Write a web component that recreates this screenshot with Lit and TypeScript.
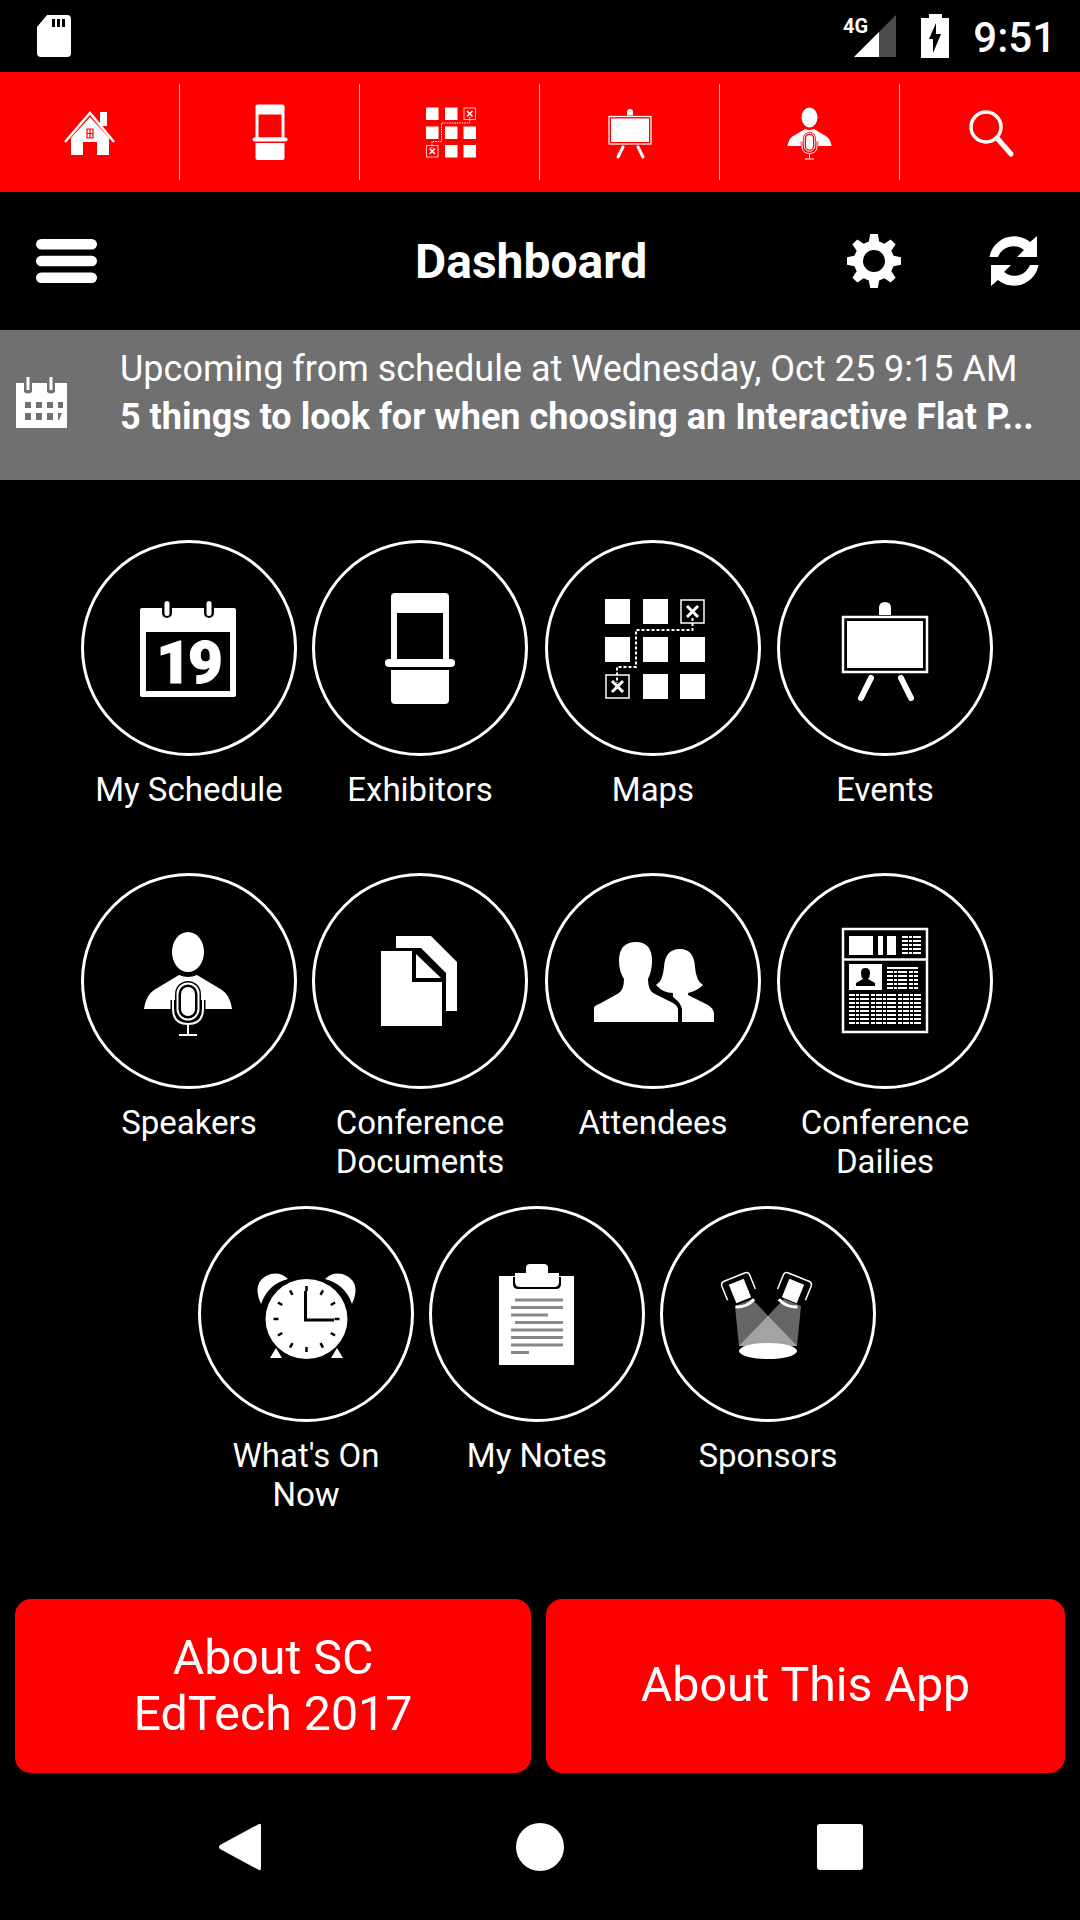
import { LitElement, css, html, svg } from 'lit'
import { customElement } from 'lit/decorators.js'

// icons are drawn in a 120 box centred on the circle, the top bar shows them at half size
const calendar = svg`
  <rect x="11" y="20" width="96" height="89" rx="2" class="w"></rect>
  <rect x="17" y="44" width="84" height="59" class="c"></rect>
  <rect x="33" y="12" width="10" height="18" rx="5" class="c"></rect>
  <rect x="35.5" y="13" width="5" height="15" rx="2.5" class="w"></rect>
  <rect x="75" y="12" width="10" height="18" rx="5" class="c"></rect>
  <rect x="77.5" y="13" width="5" height="15" rx="2.5" class="w"></rect>
  <text x="59" y="95" class="cal-num">19</text>`

const exhibitors = svg`
  <path d="M35 5H85Q89 5 89 9V72H31V9Q31 5 35 5Z" class="w"></path>
  <rect x="37" y="25" width="46" height="46" class="c"></rect>
  <rect x="25" y="71" width="70" height="8" rx="4" class="w"></rect>
  <path d="M31 82H89V112Q89 116 85 116H35Q31 116 31 112Z" class="w"></path>`

const maps = svg`
  <rect x="50" y="11" width="25" height="25" class="w"></rect>
  <rect x="12" y="11" width="25" height="25" class="w"></rect>
  <rect x="12" y="49" width="25" height="25" class="w"></rect>
  <rect x="50" y="49" width="25" height="25" class="w"></rect>
  <rect x="87" y="49" width="25" height="25" class="w"></rect>
  <rect x="50" y="86" width="25" height="25" class="w"></rect>
  <rect x="87" y="86" width="25" height="25" class="w"></rect>
  <rect x="88" y="12" width="23" height="23" class="ln thin"></rect>
  <rect x="13" y="87" width="23" height="23" class="ln thin"></rect>
  <path d="M94 18L105 29M105 18L94 29M19 93L30 104M30 93L19 104" class="ln x"></path>
  <path d="M99.5 30V42H43V79H24V95" class="ln dash"></path>`

const events = svg`
  <path d="M54 27V20Q54 14 60 14Q66 14 66 20V27Z" class="w"></path>
  <rect x="18" y="29" width="84" height="55" class="ln thick"></rect>
  <rect x="22" y="33" width="76" height="47" class="w"></rect>
  <path d="M46 90L36 110M76 90L86 110" class="ln leg"></path>`

const speakers = svg`
  <ellipse cx="59" cy="31" rx="16" ry="20" class="w"></ellipse>
  <path d="M15 88Q17 74 25 69L50 54Q59 58 68 54L93 69Q101 74 103 88Z" class="w"></path>
  <path d="M44 79V88Q44 103 59 103Q74 103 74 88V79" class="ln halo"></path>
  <rect x="46" y="60" width="26" height="41" rx="13" class="c"></rect>
  <rect x="48.5" y="62.5" width="21" height="36" rx="10.5" class="ln mic"></rect>
  <rect x="52" y="66" width="14" height="29" rx="7" class="w"></rect>
  <path d="M44 79V88Q44 103 59 103Q74 103 74 88V79M59 103V113M50 114H68" class="ln mic"></path>`

const documents = svg`
  <path d="M36 15H71L97 41V90H86V52L61 27H36Z" class="w"></path>
  <path d="M21 30H52V61H82V105H21Z" class="w"></path>
  <path d="M56 33L81 57H56Z" class="w"></path>`

const attendees = svg`
  <path d="M1 101V86Q3 84 8 82L26 72Q31 68 31 58Q26 50 26 40Q26 21 43 21Q59 21 59 40Q59 50 55 58Q55 68 60 72L80 82Q84 84 85 88V101Z" class="w"></path>
  <path d="M63 64Q70 60 71 46Q72 28 87 28Q101 28 102 46Q103 60 110 64Q104 70 95 72V74L115 84Q120 87 121 92V101H89V88Q88 82 80 76V72Q70 72 63 64Z" class="w"></path>`

const dailies = svg`
  <rect x="18" y="8" width="84" height="103" class="ln frame"></rect>
  <path d="M18 38.5H102" class="ln frame"></path>
  <rect x="24" y="15" width="24" height="19" class="w"></rect>
  <rect x="53" y="15" width="5" height="19" class="w"></rect>
  <rect x="62" y="15" width="9" height="19" class="w"></rect>
  <path d="M77 16H96M77 20H96M77 24H96M77 28H96M77 32H96" class="ln tiny"></path>
  <rect x="24" y="43" width="33" height="26" class="w"></rect>
  <path d="M40.5 47Q45 47 45 52Q45 56 43 58L50 62V65H31V62L38 58Q36 56 36 52Q36 47 40.5 47Z" class="c"></path>
  <path d="M62 47H93" class="ln bar"></path>
  <path d="M62 51H93M62 55H93M62 59H93M62 63H93M62 67H93" class="ln tiny"></path>
  <path d="M24 74H96M24 78H96M24 82H96M24 86H96M24 90H96M24 94H96M24 98H96M24 102H96" class="ln tiny"></path>`

// ticks of the clock face
const ticks = Array.from({ length: 12 }, (_, i) => i * 30)
const clock = svg`
  <path d="M15 50Q6 30 20 22Q32 16 42 25Q22 30 15 50Z" class="w"></path>
  <path d="M106 50Q115 30 101 22Q89 16 79 25Q99 30 106 50Z" class="w"></path>
  <path d="M24 104L30 94L36 104ZM97 104L91 94L85 104Z" class="w"></path>
  <ellipse cx="60.5" cy="65" rx="41" ry="40" class="w"></ellipse>
  ${ticks.map((a) => svg`<line x1="60.5" y1="32" x2="60.5" y2="37" class="ln tick" transform="rotate(${a} 60.5 65)"></line>`)}
  <path d="M59.5 37V66H88" class="ln hand"></path>`

const notes = svg`
  <rect x="22" y="22" width="75" height="89" class="w"></rect>
  <path d="M36 23H84V30Q84 35 79 35H41Q36 35 36 30Z" class="c"></path>
  <path d="M38 19H49V14Q49 10 53 10H67Q71 10 71 14V19H82V28Q82 33 77 33H43Q38 33 38 28Z" class="w"></path>
  <path d="M38 46H86M34 53.5H86M34 61H71M38 68.5H86M34 76H86M34 83.5H86M34 91H86M34 98.5H52" class="ln note"></path>`

const can = svg`
  <path d="M-15 4V-11Q-15 -15 -11 -15H11Q15 -15 15 -11V4" class="ln thin"></path>
  <path d="M-8 -10H8V10H-8Z" class="w"></path>
  <path d="M-10 13Q0 18 10 13" class="ln can-rim"></path>`

const sponsors = svg`
  <polygon points="27,52 44,45 89,92 31,92" class="beam"></polygon>
  <polygon points="93,52 76,45 31,92 89,92" class="beam"></polygon>
  <ellipse cx="60" cy="97" rx="29" ry="8" class="w"></ellipse>
  <g transform="translate(32 37) rotate(-22)">${can}</g>
  <g transform="translate(85 37) rotate(22)">${can}</g>`

const home = svg`
  <path d="M30 15L49 36V53H37V40H23V53H11V36Z" class="w"></path>
  <rect x="40" y="10" width="7" height="14" class="w"></rect>
  <path d="M5 40L30 11L54 40" class="ln roof"></path>
  <path d="M27 27H33V36H27ZM30 27V36M27 31.5H33" class="ln pane"></path>`

const search = svg`
  <circle cx="26" cy="25" r="15" class="ln glass"></circle>
  <path d="M37 36L51 52" class="ln handle"></path>`

type Tile = { label: string[]; icon: unknown }

const rows: Tile[] = [
  { label: ['My Schedule'], icon: calendar },
  { label: ['Exhibitors'], icon: exhibitors },
  { label: ['Maps'], icon: maps },
  { label: ['Events'], icon: events },
  { label: ['Speakers'], icon: speakers },
  { label: ['Conference', 'Documents'], icon: documents },
  { label: ['Attendees'], icon: attendees },
  { label: ['Conference', 'Dailies'], icon: dailies },
  { label: ["What's On", 'Now'], icon: clock },
  { label: ['My Notes'], icon: notes },
  { label: ['Sponsors'], icon: sponsors },
]

const topIcons = [home, exhibitors, maps, events, speakers, search]

@customElement('app-root')
export class AppRoot extends LitElement {
  render() {
    return html`
      <div class="status">
        <svg class="sd" width="34" height="42" viewBox="0 0 34 42">
          <path d="M10 0H30Q34 0 34 4V38Q34 42 30 42H4Q0 42 0 38V12Z" fill="#fff"></path>
          <path d="M15 4H18V12H15ZM20 4H23V12H20ZM25 4H28V12H25Z" fill="#000"></path>
        </svg>
        <svg class="signal" width="60" height="44" viewBox="0 0 60 44">
          <path d="M16 43L58 1V43Z" fill="#4d4d4d"></path>
          <path d="M16 43L41 18V43Z" fill="#fff"></path>
          <text x="5" y="19" class="fourg">4G</text>
        </svg>
        <svg class="battery" width="28" height="44" viewBox="0 0 28 44">
          <path d="M8 0H21V4H28V44H0V4H8Z" fill="#fff"></path>
          <path d="M15 9L8 25H12V39L20 20H15Z" fill="#000"></path>
        </svg>
        <span class="clock">9:51</span>
      </div>

      <nav class="topbar">
        ${topIcons.map(
          (icon) => html`<div class="topcell">
            <svg width="60" height="60" viewBox=${icon === home || icon === search ? '0 0 60 60' : '0 0 120 120'}>${icon}</svg>
          </div>`
        )}
      </nav>

      <header class="head">
        <svg class="burger" width="61" height="44" viewBox="0 0 61 44">
          <rect width="61" height="10.5" rx="5.2" fill="#fff"></rect>
          <rect y="16.7" width="61" height="10.5" rx="5.2" fill="#fff"></rect>
          <rect y="33.4" width="61" height="10.5" rx="5.2" fill="#fff"></rect>
        </svg>
        <h1>Dashboard</h1>
        <svg class="gear" width="54" height="54" viewBox="0 0 24 24">
          <path fill="#fff" fill-rule="evenodd" d="M10.3 0H13.7L14.3 3.3L16.6 4.3L19.4 2.4L21.6 4.6L19.7 7.4L20.7 9.7L24 10.3V13.7L20.7 14.3L19.7 16.6L21.6 19.4L19.4 21.6L16.6 19.7L14.3 20.7L13.7 24H10.3L9.7 20.7L7.4 19.7L4.6 21.6L2.4 19.4L4.3 16.6L3.3 14.3L0 13.7V10.3L3.3 9.7L4.3 7.4L2.4 4.6L4.6 2.4L7.4 4.3L9.7 3.3ZM12 7.1A4.9 4.9 0 1 0 12 16.9A4.9 4.9 0 1 0 12 7.1Z"></path>
        </svg>
        <svg class="sync" width="50" height="50" viewBox="0 0 50 50">
          <path d="M0.5 21A25 25 0 0 1 41 6L48 0V21H28L35 14A16.5 16.5 0 0 0 9 21Z" fill="#fff"></path>
          <path d="M49.5 29A25 25 0 0 1 9 44L2 50V29H22L15 36A16.5 16.5 0 0 0 41 29Z" fill="#fff"></path>
        </svg>
      </header>

      <section class="upcoming">
        <svg class="cal-small" width="51" height="51" viewBox="0 0 51 51">
          <path d="M0 6H51V51H0Z" fill="#fff"></path>
          <path d="M8 3H16V15Q12 18 8 15ZM31 3H39V15Q35 18 31 15Z" fill="#707070"></path>
          <path d="M10.5 0H13.5V13H10.5ZM33.5 0H36.5V13H33.5Z" fill="#fff"></path>
          <path d="M9 25H15V31H9ZM20 25H26V31H20ZM31 25H37V31H31ZM42 25H47V31H42ZM9 36H15V43H9ZM20 36H26V43H20ZM31 36H37V43H31ZM42 36H46L43 43H42Z" fill="#707070"></path>
        </svg>
        <div class="up-text">
          <div class="up-line">Upcoming from schedule at Wednesday, Oct 25 9:15 AM</div>
          <div class="up-line bold">5 things to look for when choosing an Interactive Flat P...</div>
        </div>
      </section>

      <main class="tiles">
        ${rows.map(
          (t) => html`<div class="tile">
            <div class="ring"><svg width="120" height="120" viewBox="0 0 120 120">${t.icon}</svg></div>
            <div class="label">${t.label.map((l) => html`<div>${l}</div>`)}</div>
          </div>`
        )}
      </main>

      <div class="buttons">
        <div class="btn"><div>About SC</div><div>EdTech 2017</div></div>
        <div class="btn wide"><div>About This App</div></div>
      </div>

      <footer class="navbar">
        <svg width="44" height="48" viewBox="0 0 44 48"><path d="M41 1Q43 0 43 3V45Q43 48 41 47L2 26Q0 24 2 22Z" fill="#fff"></path></svg>
        <svg width="48" height="48" viewBox="0 0 48 48"><circle cx="24" cy="24" r="24" fill="#fff"></circle></svg>
        <svg width="46" height="46" viewBox="0 0 46 46"><rect width="46" height="46" rx="3" fill="#fff"></rect></svg>
      </footer>
    `
  }

  static styles = css`
    :host {
      display: block;
      width: 1080px;
      height: 1920px;
      background: #000;
      color: #fff;
      font-family: Roboto, 'Liberation Sans', sans-serif;
      overflow: hidden;
    }
    svg {
      display: block;
      overflow: visible;
    }
    .w {
      fill: #fff;
    }
    .c {
      fill: var(--cut, #000);
    }
    .ln {
      fill: none;
      stroke: #fff;
    }
    .thin {
      stroke-width: 1.5;
    }
    .x {
      stroke-width: 3;
    }
    .dash {
      stroke-width: 2;
      stroke-dasharray: 3 2;
    }
    .thick {
      stroke-width: 2.5;
    }
    .leg {
      stroke-width: 6;
      stroke-linecap: round;
    }
    .halo {
      stroke: var(--cut, #000);
      stroke-width: 5;
    }
    .mic {
      stroke-width: 2;
    }
    .frame {
      stroke-width: 2.5;
    }
    .tiny {
      stroke-width: 2;
      stroke-dasharray: 6 1 3 1 9 2 4 1;
    }
    .bar {
      stroke-width: 2;
    }
    .tick {
      stroke: #000;
      stroke-width: 2.5;
    }
    .hand {
      stroke: #000;
      stroke-width: 3;
    }
    .note {
      stroke: #888;
      stroke-width: 3;
    }
    .can-rim {
      stroke-width: 3;
    }
    .beam {
      fill: #fff;
      opacity: 0.4;
    }
    .roof {
      stroke-width: 2.5;
    }
    .pane {
      stroke: #f00;
      stroke-width: 1.2;
    }
    .glass {
      stroke-width: 3.5;
    }
    .handle {
      stroke-width: 5;
      stroke-linecap: round;
    }
    .cal-num {
      fill: #fff;
      stroke: #fff;
      stroke-width: 1;
      font-size: 60px;
      font-weight: 900;
      letter-spacing: -3px;
      text-anchor: middle;
    }
    .fourg {
      fill: #fff;
      font-size: 20px;
      font-weight: 700;
    }

    .status {
      height: 72px;
      display: flex;
      align-items: center;
      padding: 0 24px 0 37px;
      box-sizing: border-box;
    }
    .sd {
      margin-right: auto;
    }
    .signal {
      margin-right: 23px;
    }
    .battery {
      margin-right: 24px;
    }
    .clock {
      font-size: 42px;
      font-weight: 500;
      line-height: 44px;
      margin-top: 3px;
    }

    .topbar {
      height: 120px;
      background: #f00;
      display: flex;
      --cut: #f00;
      padding: 12px 0;
      box-sizing: border-box;
    }
    .topcell {
      width: 180px;
      box-sizing: border-box;
      display: flex;
      align-items: center;
      justify-content: center;
      border-right: 1px solid #ffb0b0;
    }
    .topcell:last-child {
      border-right: 0;
    }

    .head {
      height: 138px;
      display: flex;
      align-items: center;
      padding: 0 41px 0 36px;
      box-sizing: border-box;
    }
    .head h1 {
      margin: 0 auto 0 0;
      padding-left: 318px;
      font-size: 48px;
      font-weight: 700;
    }
    .gear {
      margin-right: 88px;
    }

    .upcoming {
      height: 150px;
      background: #707070;
      display: flex;
      align-items: center;
      padding: 0 0 0 16px;
      box-sizing: border-box;
    }
    .cal-small {
      margin: -5px 0 0 0;
      flex: none;
    }
    .up-text {
      margin: -24px 0 0 53px;
      width: 920px;
    }
    .up-line {
      font-size: 36px;
      line-height: 48px;
      white-space: nowrap;
    }
    .bold {
      font-weight: 700;
    }

    .tiles {
      height: 1119px;
      padding: 60px 6px 0 0;
      box-sizing: border-box;
      display: flex;
      flex-wrap: wrap;
      justify-content: center;
      align-content: flex-start;
    }
    .tile {
      width: 230px;
      height: 333px;
    }
    .tile:nth-child(4n + 2) {
      width: 232px;
    }
    .tile:nth-child(4n + 3) {
      width: 234px;
    }
    .tile:nth-child(n + 9) {
      width: 231px;
    }
    .ring {
      width: 216px;
      height: 216px;
      margin: 0 auto;
      border: 3px solid #fff;
      border-radius: 50%;
      box-sizing: border-box;
      display: flex;
      align-items: center;
      justify-content: center;
    }
    .label {
      margin-top: 14px;
      font-size: 33px;
      line-height: 39px;
      text-align: center;
    }

    .buttons {
      display: flex;
      gap: 15px;
      padding: 0 15px;
    }
    .btn {
      width: 516px;
      height: 174px;
      background: #f00;
      border-radius: 16px;
      display: flex;
      flex-direction: column;
      align-items: center;
      justify-content: center;
      font-size: 48.3px;
      line-height: 56px;
    }
    .wide {
      width: 519px;
      padding-bottom: 3px;
      box-sizing: border-box;
    }

    .navbar {
      height: 147px;
      display: flex;
      align-items: center;
      justify-content: space-between;
      padding: 0 217px 0 218px;
      box-sizing: border-box;
    }
  `
}
